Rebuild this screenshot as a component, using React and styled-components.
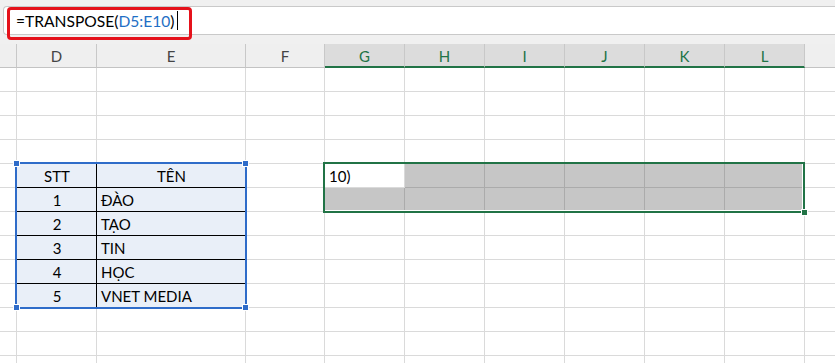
import React from "react";
import styled, { createGlobalStyle } from "styled-components";

const GlobalStyle = createGlobalStyle`
  html, body {
    margin: 0;
    padding: 0;
    background: #f0f0f0;
    overflow: hidden;
  }
  body {
    font-family: Lato, "Noto Sans", sans-serif;
    color: #000;
  }
`;

const columns = [
  { key: "", width: 17 },
  { key: "D", width: 80 },
  { key: "E", width: 149 },
  { key: "F", width: 79 },
  { key: "G", width: 80 },
  { key: "H", width: 80 },
  { key: "I", width: 80 },
  { key: "J", width: 80 },
  { key: "K", width: 80 },
  { key: "L", width: 80 },
  { key: "", width: 50 },
];

const selectedCols = ["G", "H", "I", "J", "K", "L"];

const table = [
  ["STT", "TÊN"],
  ["1", "ĐÀO"],
  ["2", "TẠO"],
  ["3", "TIN"],
  ["4", "HỌC"],
  ["5", "VNET MEDIA"],
];

const ROWS = 13;

const Page = styled.div`
  width: 835px;
  height: 363px;
  overflow: hidden;
`;

const FormulaArea = styled.div`
  height: 44px;
  box-sizing: border-box;
  padding: 6px 0 0 3px;
  position: relative;
`;

const FormulaBar = styled.div`
  height: 29px;
  box-sizing: border-box;
  background: #fff;
  border: 1px solid #c9c9c9;
  border-right: none;
  border-radius: 4px 0 0 4px;
  display: flex;
  align-items: center;
  padding-left: 12px;
  font-size: 15.6px;
`;

const Ref = styled.span`
  color: #1f6fc5;
`;

const Caret = styled.span`
  display: inline-block;
  width: 1px;
  height: 19px;
  background: #000;
  margin-left: 2px;
`;

/* red annotation drawn over the formula bar */
const Highlight = styled.div`
  position: absolute;
  left: 7px;
  top: 7px;
  width: 185px;
  height: 33px;
  box-sizing: border-box;
  border: 3px solid #e5121b;
  border-radius: 4px;
  pointer-events: none;
`;

const Sheet = styled.div`
  display: grid;
  grid-template-columns: ${columns.map((c) => c.width + "px").join(" ")};
  grid-template-rows: 24px repeat(${ROWS}, 24px);
`;

const Header = styled.div`
  grid-row: 1;
  grid-column: ${(p) => p.$col};
  box-sizing: border-box;
  display: flex;
  align-items: center;
  justify-content: center;
  font-size: 15px;
  color: ${(p) => (p.$active ? "#217346" : "#444")};
  background: ${(p) => (p.$active ? "#dcdcdc" : "#efefef")};
  border-right: 1px solid ${(p) => (p.$last ? "transparent" : "#c8c8c8")};
  border-bottom: ${(p) =>
    p.$active ? "2px solid #217346" : "1px solid #c3c3c3"};
  padding-top: ${(p) => (p.$active ? "1px" : "0")};
`;

const Cell = styled.div`
  grid-row: ${(p) => p.$row};
  grid-column: ${(p) => p.$col};
  box-sizing: border-box;
  display: flex;
  align-items: center;
  justify-content: ${(p) => (p.$center ? "center" : "flex-start")};
  padding: 1px 3px 0 4px;
  font-size: 15px;
  white-space: nowrap;
  background: ${(p) => p.$bg || "#fff"};
  border-right: 1px solid ${(p) => p.$right || "#dadada"};
  border-bottom: 1px solid ${(p) => p.$bottom || "#dadada"};
`;

const Selection = styled.div`
  grid-row: ${(p) => p.$rows};
  grid-column: ${(p) => p.$cols};
  margin: ${(p) => p.$margin};
  position: relative;
  z-index: 2;
  pointer-events: none;
  border: 2px solid ${(p) => p.$color};
  box-shadow: ${(p) => p.$inner || "none"};
`;

const Handle = styled.span`
  position: absolute;
  width: 5px;
  height: 5px;
  background: ${(p) => p.$color};
  border: 1px solid #fff;
  ${(p) => (p.$top ? "top" : "bottom")}: ${(p) => p.$off}px;
  ${(p) => (p.$left ? "left" : "right")}: ${(p) => p.$off}px;
`;

function cellProps(row, ci) {
  const col = columns[ci].key;
  // table D5:E10
  if ((col === "D" || col === "E") && row >= 5 && row <= 10) {
    const data = table[row - 5];
    const isD = col === "D";
    return {
      text: isD ? data[0] : data[1],
      center: isD || row === 5,
      bg: "#e9eff8",
      right: isD ? "#000" : "#dadada",
      bottom: row < 10 ? "#000" : "#dadada",
    };
  }
  if (selectedCols.includes(col) && (row === 5 || row === 6)) {
    if (col === "G" && row === 5) return { text: "10)" };
    return { bg: "#c6c6c6", right: "#ababab", bottom: "#ababab" };
  }
  return {};
}

export default function App() {
  const cells = [];
  for (let r = 1; r <= ROWS; r++) {
    columns.forEach((c, ci) => {
      const p = cellProps(r, ci);
      cells.push(
        <Cell
          key={r + "-" + ci}
          $row={r + 1}
          $col={ci + 1}
          $center={p.center}
          $bg={p.bg}
          $right={p.right}
          $bottom={p.bottom}
        >
          {p.text}
        </Cell>
      );
    });
  }

  const blue = "#2f6cc9";
  const green = "#217346";

  return (
    <Page>
      <GlobalStyle />
      <FormulaArea>
        <FormulaBar>
          =TRANSPOSE(<Ref>D5:E10</Ref>)<Caret />
        </FormulaBar>
        <Highlight />
      </FormulaArea>
      <Sheet>
        {columns.map((c, i) => (
          <Header
            key={"h" + i}
            $col={i + 1}
            $active={selectedCols.includes(c.key)}
            $last={i === columns.length - 1}
          >
            {c.key}
          </Header>
        ))}
        {cells}
        <Selection $rows="6 / 12" $cols="2 / 4" $margin="-2px -1px -1px -2px" $color={blue}>
          <Handle $color={blue} $off={-4} $top $left />
          <Handle $color={blue} $off={-4} $top />
          <Handle $color={blue} $off={-4} $left />
          <Handle $color={blue} $off={-4} />
        </Selection>
        <Selection
          $rows="6 / 8"
          $cols="5 / 11"
          $margin="-2px 0 -1px -2px"
          $color={green}
          $inner="inset -1px -1px 0 #fff"
        >
          <Handle $color={green} $off={-5} />
        </Selection>
      </Sheet>
    </Page>
  );
}
